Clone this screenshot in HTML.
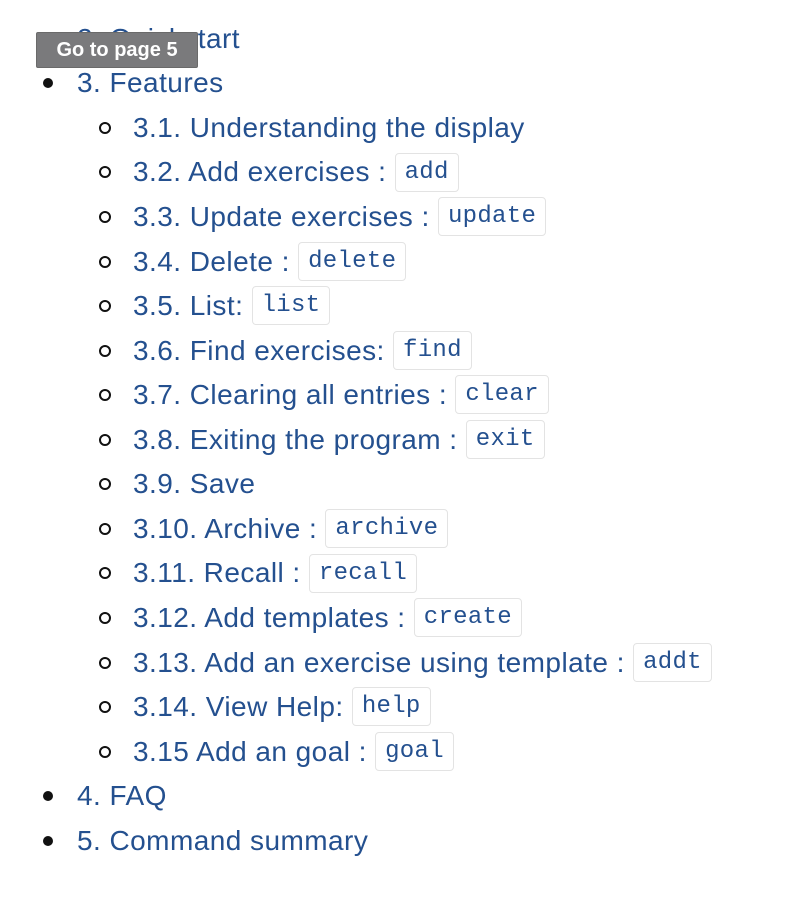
<!DOCTYPE html>
<html><head><style>
body{margin:0;width:794px;height:920px;background:#fff;overflow:hidden;font-family:"Liberation Sans",sans-serif;}
.l{position:absolute;left:0;height:44.56px;line-height:44.56px;font-size:28px;letter-spacing:0.45px;color:#24508f;white-space:nowrap;}
.b{position:absolute;left:43px;top:18px;width:10px;height:10px;border-radius:50%;background:#111;}
.s{position:absolute;left:99px;top:17px;width:8px;height:8px;border-radius:50%;border:2px solid #111;}
.t1{position:absolute;left:77px;top:1px;}
.t2{position:absolute;left:133px;top:1px;}
code{font-family:"Liberation Mono",monospace;font-size:24px;display:inline-block;line-height:37px;padding:0 9px;border:1.5px solid #e3e3e3;border-radius:4px;vertical-align:middle;margin-top:-4px;letter-spacing:0.3px;}
.tip{position:absolute;left:36px;top:32px;width:160px;height:34px;background:#7a7a7c;border:1px solid #6a6a6a;color:#fff;font-weight:bold;font-size:20px;line-height:34px;text-align:center;border-radius:2px;}
</style></head><body>
<div class="l" style="top:15.7px"><span class="t1">2. Quickstart</span></div>
<div class="l" style="top:60.3px"><i class="b"></i><span class="t1">3. Features</span></div>
<div class="l" style="top:104.8px"><i class="s"></i><span class="t2">3.1. Understanding the display</span></div>
<div class="l" style="top:149.4px"><i class="s"></i><span class="t2">3.2. Add exercises : <code>add</code></span></div>
<div class="l" style="top:193.9px"><i class="s"></i><span class="t2">3.3. Update exercises : <code>update</code></span></div>
<div class="l" style="top:238.5px"><i class="s"></i><span class="t2">3.4. Delete : <code>delete</code></span></div>
<div class="l" style="top:283.1px"><i class="s"></i><span class="t2">3.5. List: <code>list</code></span></div>
<div class="l" style="top:327.6px"><i class="s"></i><span class="t2">3.6. Find exercises: <code>find</code></span></div>
<div class="l" style="top:372.2px"><i class="s"></i><span class="t2">3.7. Clearing all entries : <code>clear</code></span></div>
<div class="l" style="top:416.7px"><i class="s"></i><span class="t2">3.8. Exiting the program : <code>exit</code></span></div>
<div class="l" style="top:461.3px"><i class="s"></i><span class="t2">3.9. Save</span></div>
<div class="l" style="top:505.9px"><i class="s"></i><span class="t2">3.10. Archive : <code>archive</code></span></div>
<div class="l" style="top:550.4px"><i class="s"></i><span class="t2">3.11. Recall : <code>recall</code></span></div>
<div class="l" style="top:595px"><i class="s"></i><span class="t2">3.12. Add templates : <code>create</code></span></div>
<div class="l" style="top:639.5px"><i class="s"></i><span class="t2">3.13. Add an exercise using template : <code>addt</code></span></div>
<div class="l" style="top:684.1px"><i class="s"></i><span class="t2">3.14. View Help: <code>help</code></span></div>
<div class="l" style="top:728.7px"><i class="s"></i><span class="t2">3.15 Add an goal : <code>goal</code></span></div>
<div class="l" style="top:773.2px"><i class="b"></i><span class="t1">4. FAQ</span></div>
<div class="l" style="top:817.8px"><i class="b"></i><span class="t1">5. Command summary</span></div>
<div class="tip">Go to page 5</div>
</body></html>
